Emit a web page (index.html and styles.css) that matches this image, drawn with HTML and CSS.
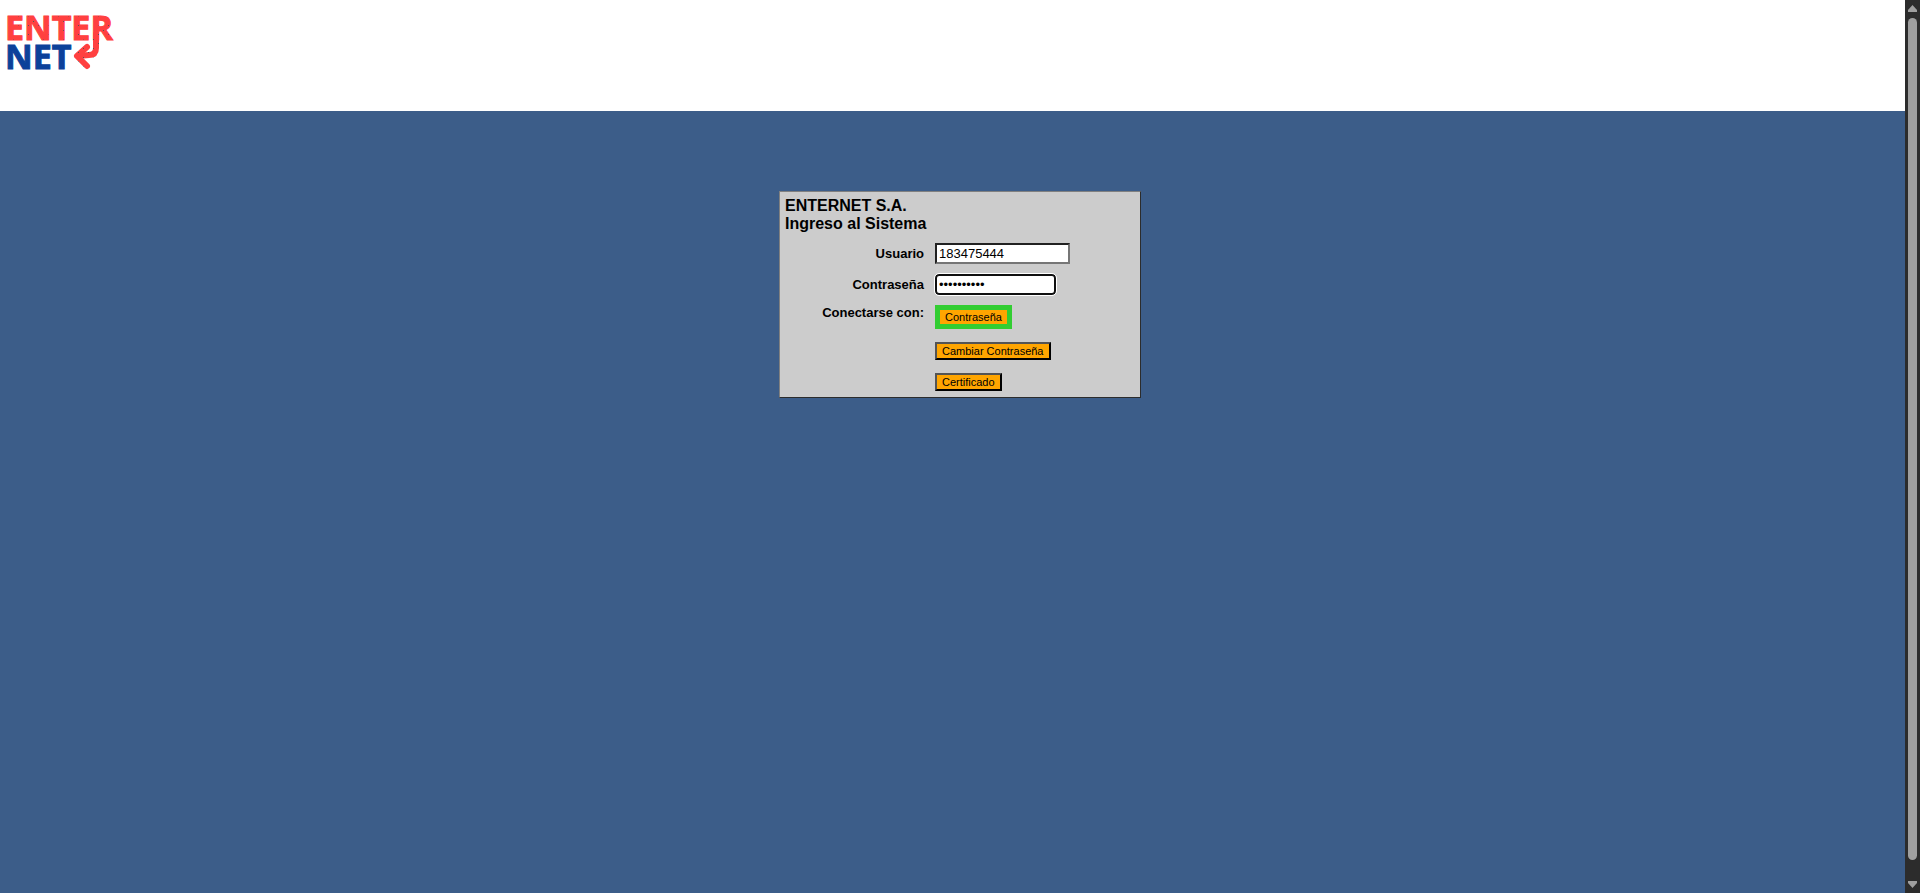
FILE: index.html
```html
<!DOCTYPE html>
<html lang="es">
<head>
<meta charset="utf-8">
<title>ENTERNET S.A.</title>
<link rel="stylesheet" href="styles.css">
</head>
<body>
<div class="page">
  <header class="header">
    <svg class="logo" width="130" height="80" viewBox="0 0 130 80" role="img" aria-label="ENTERNET">
      <defs>
        <pattern id="dots" width="10" height="9" patternUnits="userSpaceOnUse">
          <rect width="10" height="9" fill="#ff4040"/>
          <rect x="3" y="3" width="1" height="1" fill="#555"/>
          <rect x="8" y="7" width="1" height="1" fill="#555"/>
        </pattern>
      </defs>
      <text class="logo-text logo-red" x="5" y="40">ENTER</text>
      <text class="logo-text logo-blue" x="5" y="69">NET</text>
      <path class="logo-arrow" d="M96 34V48Q96 55 89 55L78 56"/>
      <path class="logo-arrow" d="M87 47L77 56L87 66"/>
    </svg>
  </header>
  <main class="main">
    <form class="login">
      <h1 class="title">ENTERNET S.A.<br>Ingreso al Sistema</h1>
      <div class="fields">
        <label class="label" for="user">Usuario</label>
        <input class="input" id="user" type="text" value="183475444">
        <label class="label" for="password">Contraseña</label>
        <input class="input input-focus" id="password" type="password" value="1234567890">
        <span class="label label-top">Conectarse con:</span>
        <div class="actions">
          <button class="button button-main" type="button">Contraseña</button>
          <button class="button" type="button">Cambiar Contraseña</button>
          <button class="button" type="button">Certificado</button>
        </div>
      </div>
    </form>
  </main>
</div>
<div class="scrollbar" aria-hidden="true">
  <svg width="9" height="7" viewBox="0 0 9 7"><path d="M4.5 0L9 5V7H0V5Z"/></svg>
  <div class="thumb"></div>
  <svg width="9" height="7" viewBox="0 0 9 7"><path d="M4.5 7L9 2V0H0V2Z"/></svg>
</div>
</body>
</html>
```

FILE: styles.css
```css
* { box-sizing: border-box; }

body {
  margin: 0;
  min-height: 100vh;
  display: flex;
  font-family: "Liberation Sans", Arial, sans-serif;
  color: #000;
}

.page {
  flex: 1;
  display: flex;
  flex-direction: column;
}

.header {
  height: 111px;
  background: #fff;
}

.logo { display: block; }

.logo-text {
  font-family: "Open Sans", "Noto Sans", sans-serif;
  font-size: 34px;
  font-weight: 700;
  stroke-width: 1;
}

.logo-red { fill: url(#dots); stroke: #ff4040; }
.logo-blue { fill: #0c419a; stroke: #0c419a; }

.logo-arrow {
  fill: none;
  stroke: url(#dots);
  stroke-width: 6;
  stroke-linecap: round;
  stroke-linejoin: round;
}

.main {
  flex: 1;
  padding: 80px 0 0 15px;
  background: #3c5d89;
}

.login {
  width: 362px;
  margin: 0 auto;
  padding: 5px 5px 6px;
  border: 1px solid;
  border-color: #808080 #2c2c2c #2c2c2c #808080;
  background: #ccc;
}

.title {
  margin: 0;
  font-size: 16px;
  line-height: 18px;
}

.fields {
  display: grid;
  grid-template-columns: 139px auto;
  justify-items: start;
  align-items: center;
  gap: 10px 11px;
  margin-top: 10px;
}

.label {
  justify-self: end;
  font-size: 13px;
  font-weight: 700;
  line-height: 15px;
}

.label-top { align-self: start; }

.input {
  width: 135px;
  height: 21px;
  padding: 1px 2px;
  border: 2px inset #767676;
  background: #fff;
  color: #000;
  font: 13px "Liberation Sans", Arial, sans-serif;
}

.input-focus {
  width: 121px;
  border: 2px solid #101010;
  border-radius: 4px;
  outline: 1px solid #fff;
}

.actions {
  display: flex;
  flex-direction: column;
  align-items: flex-start;
  gap: 13px;
}

.button {
  height: 18px;
  padding: 0 5px;
  border: 2px outset #000;
  background: #ffa500;
  color: #000;
  font: 11px "Liberation Sans", Arial, sans-serif;
  line-height: 14px;
}

.button-main {
  height: 24px;
  border: 5px solid #32cd32;
}

.scrollbar {
  width: 15px;
  padding: 5px 3px;
  display: flex;
  flex-direction: column;
  align-items: center;
  gap: 6px;
  background: #2c2c2c;
}

.scrollbar svg { fill: #9f9f9f; }

.thumb {
  flex: 1;
  width: 9px;
  margin-bottom: 15px;
  border-radius: 5px;
  background: #9f9f9f;
}
```
